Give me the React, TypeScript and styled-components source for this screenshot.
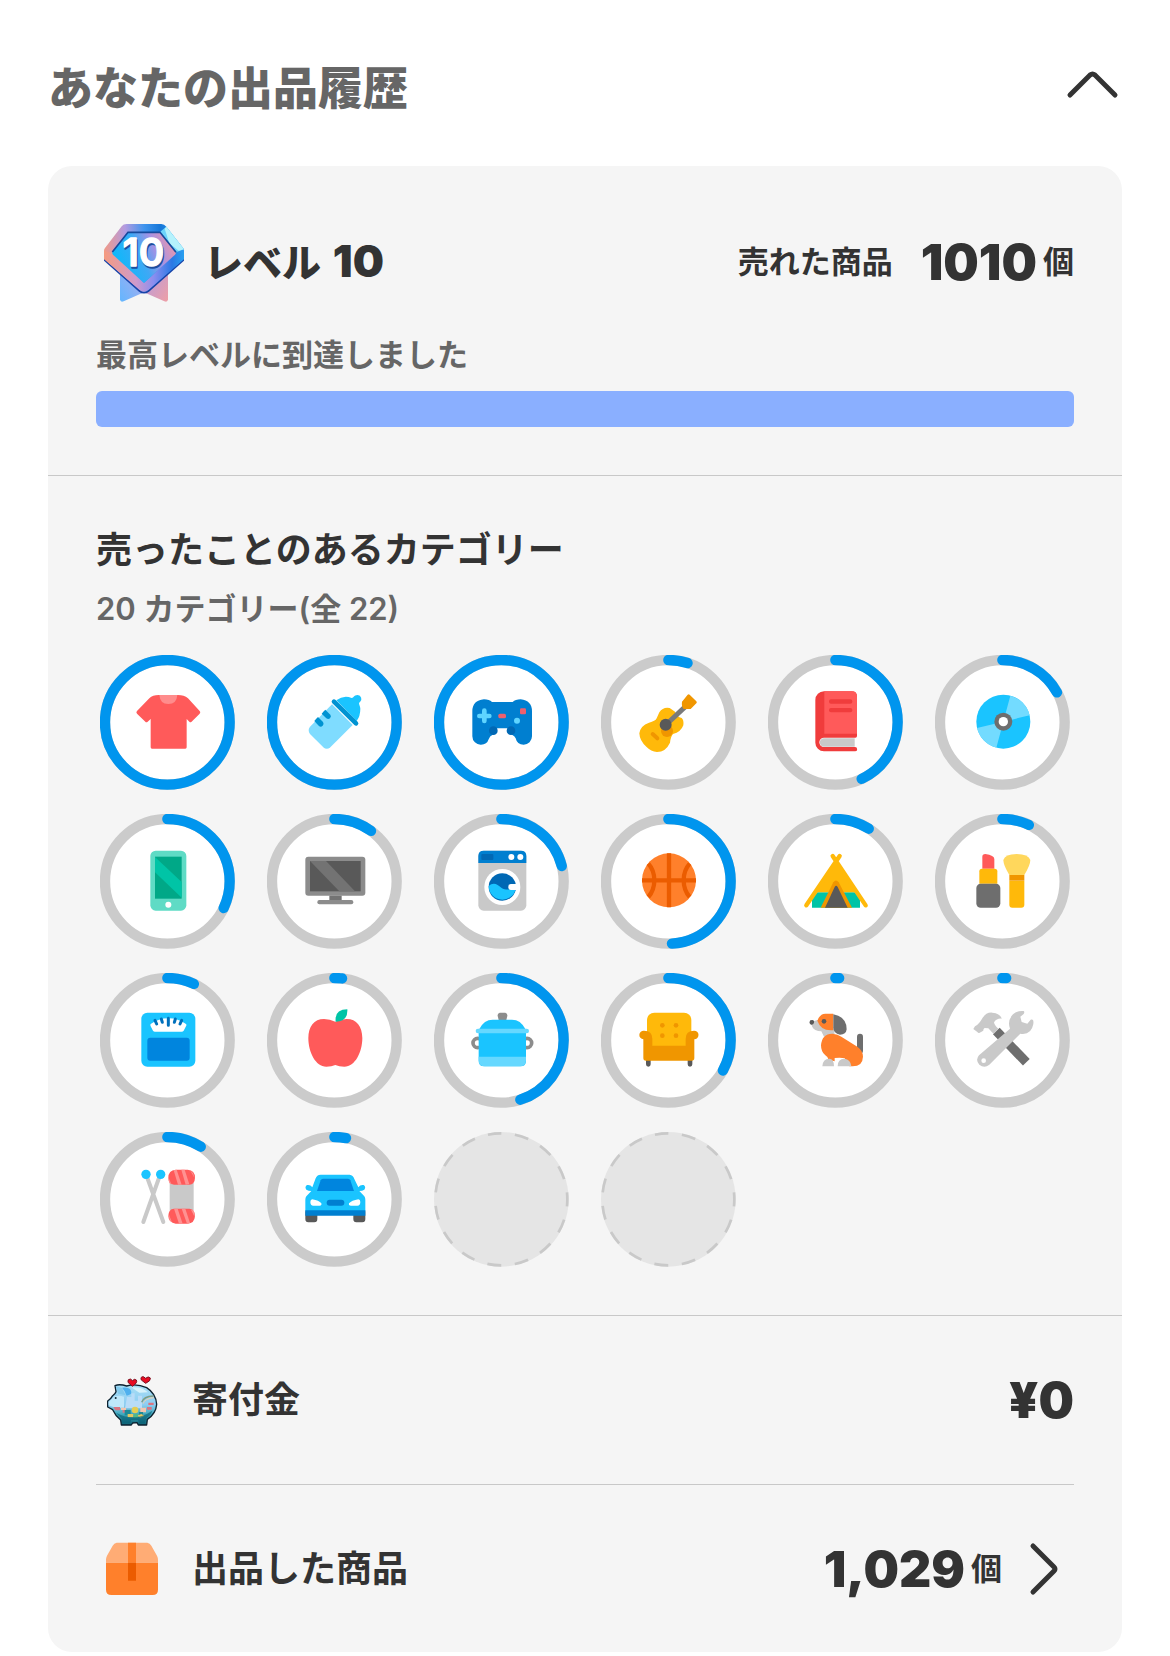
import React, { useState } from "react";
import styled, { createGlobalStyle } from "styled-components";

const GlobalStyle = createGlobalStyle`
  *, *::before, *::after { box-sizing: border-box; }
  body {
    margin: 0;
    background: #fff;
    color: #333;
    font-family: Inter, "Noto Sans CJK JP", sans-serif;
    -webkit-font-smoothing: antialiased;
  }
`;

const Page = styled.main`
  padding: 56px 48px 4px;
`;

const Header = styled.header`
  display: flex;
  align-items: center;
  justify-content: space-between;
  height: 66px;
  margin-bottom: 44px;
`;

const Title = styled.h1`
  margin: 0;
  font-size: 45px;
  line-height: 66px;
  font-weight: 900;
  color: #666;
`;

const ToggleButton = styled.button<{ $open: boolean }>`
  display: flex;
  padding: 0;
  border: 0;
  background: none;
  color: #333;
  cursor: pointer;
  svg { transform: ${(p) => (p.$open ? "none" : "rotate(180deg)")}; }
`;

const Card = styled.div`
  border-radius: 24px;
  background: #f5f5f5;
  overflow: hidden;
`;

const Section = styled.section`
  padding: 48px;
  border-bottom: 1px solid #c8c8c8;
`;

const LevelRow = styled.div`
  display: flex;
  align-items: center;
  justify-content: space-between;
  height: 96px;
`;

const LevelName = styled.div`
  display: flex;
  align-items: center;
  gap: 12px;
`;

const MedalBox = styled.div`
  display: grid;
  place-items: center;
  width: 96px;
  height: 96px;
  padding-top: 2px;
`;

const LevelTitle = styled.h2`
  margin: 0;
  font-size: 39px;
  line-height: 60px;
  font-weight: 900;
`;

const LevelNumber = styled.span`
  margin-left: 4px;
  font-size: 44px;
`;

const Amount = styled.div`
  display: flex;
  align-items: center;
`;

const SoldLabel = styled.span`
  margin-right: 28px;
  font-size: 31px;
  line-height: 46px;
  font-weight: 600;
`;

const Figure = styled.span`
  font-size: 50px;
  line-height: 60px;
  font-weight: 900;
`;

const Unit = styled.span`
  margin-left: 6px;
  font-size: 31px;
  line-height: 46px;
  font-weight: 600;
`;

const Note = styled.p<{ $top: number }>`
  margin: ${(p) => p.$top}px 0 0;
  font-size: 31px;
  line-height: 46px;
  font-weight: 600;
  color: #666;
`;

const LevelBar = styled.div`
  height: 36px;
  margin-top: 13px;
  border-radius: 6px;
  background: #dcdcdc;
  overflow: hidden;
`;

const LevelFill = styled.div`
  height: 100%;
  background: #8aafff;
`;

const SectionTitle = styled.h2`
  margin: 0;
  font-size: 36px;
  line-height: 52px;
  font-weight: 700;
`;

const RingGrid = styled.ul`
  display: grid;
  grid-template-columns: repeat(6, 135px);
  justify-content: space-between;
  row-gap: 24px;
  margin: 23px 0 0;
  padding: 0 4px;
  list-style: none;
`;

const RingCell = styled.li`
  display: grid;
  place-items: center;
  height: 135px;
  > * { grid-area: 1 / 1; }
`;

const SummaryList = styled.div`
  padding: 0 48px;
`;

const SummaryRow = styled.div`
  display: flex;
  align-items: center;
  height: 169px;
  border-bottom: 1px solid #c8c8c8;
`;

const SummaryLink = styled.a`
  display: flex;
  align-items: center;
  height: 167px;
  color: inherit;
  text-decoration: none;
`;

const SummaryLabel = styled.span`
  flex: 1;
  margin-left: 24px;
  font-size: 36px;
  line-height: 52px;
  font-weight: 600;
`;

const ChevronBox = styled.span`
  display: grid;
  place-items: center;
  width: 60px;
  margin-left: 12px;
`;

const Icon = ({ children }: { children: React.ReactNode }) => (
  <svg width="72" height="72" viewBox="0 3 216 216" fill="none" aria-hidden="true">
    {children}
  </svg>
);

const Chevron = ({ side }: { side: "up" | "right" }) =>
  side === "up" ? (
    <svg width="60" height="60" viewBox="0 0 60 60" fill="none" stroke="currentColor" strokeWidth="5" strokeLinecap="round" aria-hidden="true">
      <path d="M8 36 L28 16 Q30.500 14 33 16 L53 36" />
    </svg>
  ) : (
    <svg width="60" height="60" viewBox="0 0 60 60" fill="none" stroke="currentColor" strokeWidth="5" strokeLinecap="round" aria-hidden="true">
      <path d="M19 7 L40 28 Q42 30 40 32 L19 53" />
    </svg>
  );

const Medal = () => (
  <svg width="80" height="78" viewBox="0 0 240 234" role="img" aria-label="レベル10のメダル">
    <defs>
      <linearGradient id="rim" x1="0" y1="0.45" x2="1" y2="0.4">
        <stop offset="0" stopColor="#f29a86" />
        <stop offset="0.28" stopColor="#b39be0" />
        <stop offset="0.52" stopColor="#3f94ee" />
        <stop offset="0.72" stopColor="#1677d8" />
        <stop offset="1" stopColor="#2f9af0" />
      </linearGradient>
      <linearGradient id="rimLow" x1="0" y1="0" x2="1" y2="0">
        <stop offset="0" stopColor="#f59b80" />
        <stop offset="0.4" stopColor="#cf9acb" />
        <stop offset="0.62" stopColor="#8a8ef0" />
        <stop offset="0.85" stopColor="#2a78e4" />
        <stop offset="1" stopColor="#27a0f0" />
      </linearGradient>
      <linearGradient id="gem" x1="0.1" y1="0.6" x2="0.95" y2="0.3">
        <stop offset="0" stopColor="#10b8fa" />
        <stop offset="0.42" stopColor="#3fa8f5" />
        <stop offset="0.7" stopColor="#a592e4" />
        <stop offset="1" stopColor="#e096b4" />
      </linearGradient>
      <linearGradient id="ribbonLeft" x1="0" y1="1" x2="1" y2="0">
        <stop offset="0" stopColor="#62b6ff" />
        <stop offset="0.5" stopColor="#8fb0f4" />
        <stop offset="1" stopColor="#c89ddc" />
      </linearGradient>
      <linearGradient id="ribbonRight" x1="0" y1="0" x2="1" y2="1">
        <stop offset="0" stopColor="#a99bea" />
        <stop offset="1" stopColor="#ef9fa5" />
      </linearGradient>
    </defs>
    <path d="M48 120 V226 Q49 236 59 232 L122 204 V150Z" fill="url(#ribbonLeft)" />
    <path d="M192 120 V226 Q191 236 181 232 L118 204 V150Z" fill="url(#ribbonRight)" />
    <path d="M0 82 V110 L105 203 Q120 214 135 203 L240 110 V82Z" fill="#1743a8" />
    <path d="M68 0 H172 Q181 0 187 8 L238 73 Q240 76 240 80 V105 L134 197 Q120 209 106 197 L0 105 V80 Q0 76 3 72 L53 7 Q58 0 68 0Z" fill="url(#rim)" />
    <path d="M0 80 L24 88 L120 177 L216 88 L240 84 V105 L134 197 Q120 209 106 197 L0 105Z" fill="url(#rimLow)" />
    <path d="M168 24 L187 8 L240 76 L216 85Z" fill="#6cd4fb" />
    <path d="M182 14 L187 8 L240 76 L224 80 L196 58Z" fill="#b5f2fc" />
    <path d="M72 24 H168 L216 84 Q217 88 213 92 L120 177 L27 92 Q23 88 26 83Z" fill="url(#gem)" />
    <path d="M25 84 L72 25 H168 L216 85" fill="none" stroke="#174a9c" strokeWidth="5" />
    <text x="121" y="131" textAnchor="middle" fontFamily="Inter, sans-serif" fontSize="116" fontWeight="600" fill="#1d4e9e" stroke="#1d4e9e" strokeWidth="4" strokeLinejoin="round">10</text>
    <text x="118" y="126" textAnchor="middle" fontFamily="Inter, sans-serif" fontSize="116" fontWeight="600" fill="#fff" stroke="#fff" strokeWidth="4" strokeLinejoin="round">10</text>
  </svg>
);

const Tshirt = () => (
  <Icon>
    <path d="M80 27 H138 Q156 27 168 37 L203 75 Q207 79 203 83 L178 108 Q175 110 172 107 L164 99 V184 Q164 188 160 188 H60 Q56 188 56 184 V99 L47 107 Q43 110 40 107 L15 83 Q11 79 15 75 L52 37 Q62 27 80 27Z" fill="#ff5a5a" />
    <path d="M82 27 H136 Q134 54 109 54 Q84 54 82 27Z" fill="#ff8c8c" />
  </Icon>
);

const Bottle = () => (
  <Icon>
    <path d="M99 55 L161 117 L94 184 Q83 193 73 184 L33 144 Q25 132 33 122Z" fill="#7fdcff" />
    <path d="M112 43 Q134 26 158 36 C165 36 163 27 176 27 A12 12 0 0 1 183 48 C176 52 184 58 184 68 Q184 90 173 105Z" fill="#1ac4ff" />
    <path d="M105 47 L171 112" stroke="#0093d2" strokeWidth="14" strokeLinecap="round" />
    <path d="M51 99 L57 93 L72 108 Q76 114 71 119 Q65 125 59 119 L46 105Z" fill="#0093d2" />
    <path d="M73 77 L79 71 L94 86 Q98 91 93 97 Q88 101 82 97 L68 83Z" fill="#0093d2" />
  </Icon>
);

const Gamepad = () => (
  <Icon>
    <path d="M54 40 Q70 40 78 48 H140 Q148 40 164 40 Q198 44 198 76 V151 A25 25 0 0 1 173 176 Q153 176 149 157 Q146 149 138 146 L124 127 H94 L80 146 Q71 149 68 160 Q63 176 45 176 A25 25 0 0 1 19 151 V76 Q19 43 54 40Z" fill="#007fd0" />
    <circle cx="82" cy="134" r="13" fill="#0068b4" />
    <circle cx="135" cy="134" r="13" fill="#0068b4" />
    <path d="M55 74 V105 M40 90 H70" stroke="#5ed4ff" strokeWidth="14" strokeLinecap="round" />
    <rect x="97" y="83" width="23" height="14" rx="5" fill="#f0606e" />
    <rect x="162" y="67" width="18" height="18" rx="4" fill="#f0606e" />
    <circle cx="153" cy="104" r="9" fill="#5ed4ff" />
  </Icon>
);

const Guitar = () => (
  <Icon>
    <path d="M79 79 Q90 62 110 66 L126 77 Q132 93 146 96 Q153 102 151 118 Q144 138 120 144 Q113 152 111 170 Q98 198 72 198 Q54 196 40 182 Q20 165 19 142 Q22 119 48 110 Q67 106 71 97Z" fill="#ffb90a" />
    <circle cx="102" cy="135" r="18" fill="#f09600" />
    <path d="M59 144 L73 157" stroke="#f09600" strokeWidth="12" strokeLinecap="round" />
    <path d="M98 117 L157 62" stroke="#7a7a7a" strokeWidth="15" />
    <circle cx="98" cy="116" r="18" fill="#595959" />
    <path d="M147 47 L164 26 Q167 23 170 26 L190 46 Q193 49 190 52 L173 69 H152 Q145 61 147 47Z" fill="#f09600" />
  </Icon>
);

const Book = () => (
  <Icon>
    <path d="M72 16 H155 Q171 16 171 32 V150 Q171 155 166 155 H72 A14 14 0 0 0 72 183 H165 A6 6 0 0 1 165 196 H72 A26 26 0 0 1 46 170 V42 A26 26 0 0 1 72 16Z" fill="#f03c3c" />
    <path d="M72 157 H164 V182 H72 A12 12 0 0 1 72 157Z" fill="#c9c9c9" />
    <path d="M73 16 H155 Q171 16 171 32 V143 H73Z" fill="#ff5a5a" />
    <rect x="87" y="40" width="70" height="13" rx="6" fill="#f03c3c" />
    <rect x="87" y="66" width="70" height="13" rx="6" fill="#f03c3c" />
  </Icon>
);

const Disc = () => (
  <Icon>
    <circle cx="109" cy="107" r="81" fill="#1ac4ff" />
    <path d="M109 107 L130 29 A81 81 0 0 1 188 88Z M109 107 L88 185 A81 81 0 0 1 30 126Z" fill="#73dbff" />
    <circle cx="109" cy="107" r="27" fill="#6e6e6e" />
    <circle cx="109" cy="107" r="14" fill="#fff" />
  </Icon>
);

const Phone = () => (
  <Icon>
    <rect x="55" y="17" width="108" height="180" rx="16" fill="#5fdbc5" />
    <rect x="69" y="35" width="80" height="126" fill="#00a887" />
    <path d="M69 36 L149 111 V158 L69 82Z" fill="#00c4a6" />
    <circle cx="109" cy="179" r="9" fill="#fff" />
  </Icon>
);

const Monitor = () => (
  <Icon>
    <rect x="19" y="35" width="180" height="117" rx="9" fill="#8c8c8c" />
    <rect x="33" y="48" width="152" height="91" fill="#595959" />
    <path d="M33 48 H81 L168 139 H121Z" fill="#737373" />
    <path d="M91 152 H128 V166 H91Z" fill="#737373" />
    <rect x="55" y="165" width="108" height="13" rx="6" fill="#8c8c8c" />
  </Icon>
);

const Washer = () => (
  <Icon>
    <rect x="37" y="17" width="144" height="180" rx="16" fill="#c9c9c9" />
    <path d="M37 54 V33 Q37 17 53 17 H165 Q181 17 181 33 V54Z" fill="#007fd0" />
    <rect x="46" y="27" width="36" height="18" rx="3" fill="#0068b4" />
    <circle cx="136" cy="36" r="9" fill="#fff" />
    <circle cx="163" cy="36" r="9" fill="#fff" />
    <circle cx="109" cy="126" r="54" fill="#fff" />
    <circle cx="109" cy="126" r="41" fill="#0068b4" />
    <path d="M68 124 C82 110 94 118 106 128 C120 138 134 132 149 132 A41 41 0 0 1 68 124Z" fill="#1ac4ff" />
    <rect x="127" y="117" width="30" height="18" rx="8" fill="#fff" />
  </Icon>
);

const Basketball = () => (
  <Icon>
    <circle cx="108" cy="106" r="81" fill="#ff802b" />
    <path d="M108 25 V187 M27 106 H189 M46 56 Q64 76 64 106 Q64 136 46 156 M170 56 Q152 76 152 106 Q152 136 170 156" stroke="#eb5c00" strokeWidth="13" />
  </Icon>
);

const Tent = () => (
  <Icon>
    <path d="M52 142 H164 L180 155 V188 H36 V155Z" fill="#00c4a6" />
    <path d="M108 46 L172 142 H44Z" fill="#ffb90a" />
    <path d="M98 33 L197 181 M119 33 L19 181" stroke="#ffb90a" strokeWidth="13" strokeLinecap="round" />
    <path d="M62 188 L100 112 Q108 101 116 112 L156 188Z" fill="#f09600" />
    <path d="M75 188 L104 126 Q108 118 113 126 L143 188Z" fill="#595959" />
  </Icon>
);

const Makeup = () => (
  <Icon>
    <path d="M46 71 V35 Q46 27 55 27 Q82 31 82 42 V71Z" fill="#ff5a5a" />
    <path d="M37 116 V79 Q37 71 45 71 H83 Q91 71 91 79 V116Z" fill="#ffb90a" />
    <rect x="28" y="116" width="72" height="72" rx="13" fill="#6e6e6e" />
    <path d="M109 45 Q114 27 149 27 Q184 27 190 45 Q190 60 172 90 H127 Q109 60 109 45Z" fill="#ffd75c" />
    <path d="M127 107 H172 V179 Q172 188 163 188 H136 Q127 188 127 179Z" fill="#ffb90a" />
    <path d="M127 90 H172 V107 H127Z" fill="#f09600" />
  </Icon>
);

const Scale = () => (
  <Icon>
    <rect x="28" y="26" width="162" height="162" rx="18" fill="#1ac4ff" />
    <rect x="46" y="101" width="127" height="69" rx="9" fill="#0085de" />
    <path d="M56 60 Q80 43 109 43 Q138 43 162 60 Q165 63 162 67 L155 80 Q153 83 149 83 H69 Q65 83 63 80 L56 67 Q54 63 56 60Z" fill="#fff" />
    <path d="M109 43 V64 M88 45 L91 55 M130 45 L127 55 M69 49 L74 60 M149 49 L144 60" stroke="#0070bc" strokeWidth="9" strokeLinecap="round" />
  </Icon>
);

const Apple = () => (
  <Icon>
    <path d="M109 53 Q93 45 75 45 C45 45 28 68 28 102 C28 145 50 188 82 188 Q98 188 109 183 Q120 188 136 188 C168 188 190 145 190 102 C190 68 173 45 143 45 Q125 45 109 53Z" fill="#ff5a5a" />
    <path d="M110 53 Q106 16 145 16 Q147 53 110 53Z" fill="#00c4a6" />
  </Icon>
);

const Pot = () => (
  <Icon>
    <circle cx="35" cy="117" r="14" stroke="#8c8c8c" strokeWidth="11" />
    <circle cx="183" cy="117" r="14" stroke="#8c8c8c" strokeWidth="11" />
    <path d="M101 26 H118 Q125 28 124 36 L121 48 H98 L95 36 Q94 28 101 26Z" fill="#8c8c8c" />
    <path d="M40 75 Q54 47 80 47 H138 Q164 47 178 75Z" fill="#1ac4ff" />
    <path d="M38 86 H180 V171 Q180 187 164 187 H54 Q38 187 38 171Z" fill="#1ac4ff" />
    <path d="M38 158 H180 V168 Q180 187 161 187 H57 Q38 187 38 168Z" fill="#66d8ff" />
    <rect x="29" y="74" width="160" height="14" rx="7" fill="#66d8ff" />
  </Icon>
);

const Sofa = () => (
  <Icon>
    <path d="M39 165 H53 V181 Q53 188 46 188 Q39 188 39 181Z M164 165 H178 V181 Q178 188 171 188 Q164 188 164 181Z" fill="#595959" />
    <rect x="42" y="26" width="133" height="110" rx="22" fill="#ffb90a" />
    <path d="M33 80 Q58 80 58 104 V125 H158 V104 Q158 80 183 80 A13 13 0 0 1 184 106 V162 Q184 170 176 170 H39 Q31 170 31 162 V106 A13 13 0 0 1 33 80Z" fill="#f09600" />
    <circle cx="88" cy="64" r="7" fill="#f09600" />
    <circle cx="129" cy="64" r="7" fill="#f09600" />
    <circle cx="88" cy="95" r="7" fill="#f09600" />
    <circle cx="129" cy="95" r="7" fill="#f09600" />
  </Icon>
);

const Dog = () => (
  <Icon>
    <path d="M180 98 V140" stroke="#6e6e6e" strokeWidth="18" strokeLinecap="round" />
    <path d="M52 48 L34 54 Q34 72 46 78 Q54 82 64 82 L72 98 L104 90 L100 70Z" fill="#c9c9c9" />
    <path d="M100 29 H76 Q60 29 52 50 Q62 79 92 79 H100Z" fill="#ff802b" />
    <path d="M100 31 Q140 38 140 76 Q138 92 120 92 Q100 90 100 70Z" fill="#6e6e6e" />
    <circle cx="72" cy="52" r="7" fill="#595959" />
    <path d="M31 49 Q44 45 42 56 Q40 63 33 62 Q25 58 31 49Z" fill="#595959" />
    <path d="M63 124 Q66 88 98 89 Q114 90 124 98 L172 128 Q189 140 189 158 Q188 187 158 187 H148 L134 163 Q124 160 104 162 V172 L86 168 Q86 160 76 154 Q63 144 63 124Z" fill="#ff802b" />
    <path d="M67 187 Q68 164 88 164 Q102 164 102 187Z M113 187 Q113 164 133 164 Q152 166 154 187Z" fill="#c9c9c9" />
  </Icon>
);

const Tools = () => (
  <Icon>
    <path d="M88 81 L178 175" stroke="#6e6e6e" strokeWidth="28" />
    <path d="M19 75 L24 67 Q37 60 46 43 Q58 24 76 26 Q100 28 104 44 Q90 42 81 55 Q82 64 94 74 L80 90 L64 73 L53 72 Q48 76 49 80 L38 86 Q34 88 31 84Z" fill="#c9c9c9" />
    <path d="M170 21 C172 22 173 25 170 30 L160 38 L164 54 L181 59 L191 47 C199 44 200 50 199 60 Q193 94 160 89 L67 182 Q52 194 37 182 Q24 168 36 154 L129 74 Q120 50 138 31 Q152 19 170 21Z" fill="#c9c9c9" />
    <circle cx="50" cy="170" r="7" fill="#fff" />
  </Icon>
);

const Yarn = () => (
  <Icon>
    <path d="M45 42 L94 177 M82 42 L34 177" stroke="#c9c9c9" strokeWidth="12" strokeLinecap="round" />
    <circle cx="42" cy="34" r="14" fill="#1ac4ff" />
    <circle cx="86" cy="34" r="14" fill="#1ac4ff" />
    <rect x="113" y="60" width="72" height="82" fill="#c9c9c9" />
    <path d="M131 20 H167 Q189 22 189 44 Q188 65 172 65 H126 Q109 63 109 44 Q109 22 131 20Z M126 137 H172 Q189 138 189 160 Q187 182 167 182 H131 Q110 180 109 160 Q109 138 126 137Z" fill="#ff5a5a" />
    <path d="M125 22 L134 20 L149 65 H138Z M148 20 H158 L172 64 L161 65Z M174 22 L183 30 L188 46Z M109 43 L119 65 L112 60Z M126 137 H137 L152 182 H141Z M149 137 H160 L174 180 L165 182Z M110 153 L120 178 L113 172Z M176 138 L186 145 L188 163Z" fill="#ff9191" />
  </Icon>
);

const Car = () => (
  <Icon>
    <path d="M19 145 H55 V168 Q55 178 46 178 H28 Q19 178 19 168Z M163 145 H199 V168 Q199 178 190 178 H172 Q163 178 163 168Z" fill="#595959" />
    <path d="M65 35 H152 Q162 36 166 48 L178 73 Q184 64 194 66 Q202 72 196 80 Q190 84 181 84 L196 100 Q199 104 199 110 V145 H19 V110 Q19 104 22 100 L37 84 Q28 84 22 80 Q16 72 24 66 Q34 64 40 73 L50 46 Q53 36 65 35Z" fill="#1ac4ff" />
    <path d="M72 47 H147 Q152 47 154 52 L165 84 H54 L65 52 Q67 47 72 47Z" fill="#0085de" />
    <path d="M19 142 H199 V158 H19Z" fill="#007fd0" />
    <rect x="83" y="110" width="53" height="18" rx="9" fill="#007fd0" />
    <path d="M40 109 Q60 112 67 121 Q69 128 62 128 H43 Q34 128 34 117 Q34 109 40 109Z M178 109 Q158 112 150 121 Q148 128 156 128 H175 Q184 128 184 117 Q184 109 178 109Z" fill="#fff" />
  </Icon>
);

const PiggyBank = () => (
  <Icon>
    <defs>
      <linearGradient id="pig" x1="0" y1="0" x2="0" y2="1">
        <stop offset="0" stopColor="#a8def5" />
        <stop offset="0.5" stopColor="#8dcdf2" />
        <stop offset="0.75" stopColor="#3aa5b8" />
        <stop offset="1" stopColor="#0c5f72" />
      </linearGradient>
    </defs>
    <path d="M57 68 Q70 62 92 69 Q120 60 152 74 Q180 92 182 124 Q180 152 154 169 L152 186 H127 L123 179 L110 180 L106 186 H76 L74 171 Q58 158 50 140 L35 132 V114 Q44 109 50 98 Q58 92 60 86Z" fill="url(#pig)" stroke="#0d2230" strokeWidth="4" strokeLinejoin="round" />
    <path d="M78 74 Q108 70 106 92 Q98 96 92 98 Q88 84 78 74Z" fill="#4fb0ee" />
    <path d="M59 70 L78 75 L89 97 L67 92Z" fill="#82caee" />
    <path d="M106 73 Q138 70 156 88 L130 89Z" fill="#d7f2fb" />
    <path d="M56 100 Q70 96 84 101 V134 H58 L38 127 V117Z" fill="#bfe7fa" />
    <path d="M93 102 H106 V91 H116 V113 H126 V98 H138 V136 H87Z" fill="#b8dcf8" />
    <path d="M137 118 Q143 100 172 99" stroke="#7f9c82" strokeWidth="4" />
    <path d="M141 122 Q147 106 174 104" stroke="#f0cfae" strokeWidth="3" />
    <path d="M52 132 H72 V142 H58Z M80 141 H92 V149 H80Z M157 119 H173 V126 H157Z M153 132 H167 V140 H153Z" fill="#d97482" />
    <path d="M75 134 H90 V141 H75Z M133 134 H150 V148 H133Z" fill="#f2c5b0" />
    <path d="M86 141 H104 V157 H86Z M129 147 H141 V160 H129Z" fill="#1d8b97" />
    <circle cx="117" cy="141" r="10" fill="#e4cd53" />
    <path d="M95 153 H112 V163 H95Z M122 158 L136 153 L146 158 L134 164Z" fill="#e3c763" />
    <path d="M113 153 H126 V165 H113Z" fill="#50b889" />
    <path d="M60 149 Q116 179 169 143 Q164 158 152 164 L146 181 H130 L126 171 H106 L102 181 H79 L77 167Z" fill="#075e73" opacity="0.6" />
    <circle cx="59" cy="105" r="3" fill="#122d3c" />
    <path d="M109 70 L96 58 Q94 48 103 48 L110 53 Q115 46 121 51 Q126 59 109 70Z M149 61 L136 51 Q132 41 142 41 L149 46 Q157 38 163 45 Q165 54 149 61Z" fill="#e80b21" stroke="#7b1121" strokeWidth="3" />
  </Icon>
);

const Parcel = () => (
  <Icon>
    <path d="M62 32 H154 Q162 33 166 41 L183 71 Q186 77 186 84 V92 H30 V84 Q30 77 33 71 L50 41 Q54 33 62 32Z" fill="#ffac75" />
    <path d="M30 92 H186 V173 Q186 189 170 189 H46 Q30 189 30 173Z" fill="#ff802b" />
    <path d="M96 32 H120 V92 H96Z" fill="#ff802b" />
    <path d="M96 92 H120 V146 H96Z" fill="#eb5c00" />
  </Icon>
);

const categories: { name: string; percent: number; Art: () => React.ReactElement }[] = [
  { name: "ファッション", percent: 100, Art: Tshirt },
  { name: "ベビー・キッズ", percent: 100, Art: Bottle },
  { name: "ゲーム", percent: 100, Art: Gamepad },
  { name: "楽器", percent: 5, Art: Guitar },
  { name: "本", percent: 43, Art: Book },
  { name: "CD・DVD", percent: 17, Art: Disc },
  { name: "スマホ", percent: 32, Art: Phone },
  { name: "テレビ", percent: 10, Art: Monitor },
  { name: "家電", percent: 21, Art: Washer },
  { name: "スポーツ", percent: 49, Art: Basketball },
  { name: "アウトドア", percent: 9, Art: Tent },
  { name: "コスメ", percent: 7, Art: Makeup },
  { name: "ダイエット", percent: 7, Art: Scale },
  { name: "食品", percent: 2, Art: Apple },
  { name: "キッチン", percent: 45, Art: Pot },
  { name: "家具", percent: 33, Art: Sofa },
  { name: "ペット", percent: 1, Art: Dog },
  { name: "DIY", percent: 1, Art: Tools },
  { name: "ハンドメイド", percent: 9, Art: Yarn },
  { name: "車", percent: 3, Art: Car },
];
const totalCategories = 22;

const Ring = ({ percent }: { percent: number }) => (
  <svg width="135" height="135" viewBox="0 0 405 405" aria-hidden="true">
    <circle cx="202" cy="202" r="187" fill="#fff" stroke="#cbcbcb" strokeWidth="31" />
    <circle
      cx="202"
      cy="202"
      r="187"
      fill="none"
      stroke="#0095ee"
      strokeWidth="31"
      strokeLinecap="round"
      pathLength={100}
      strokeDasharray={`${percent} 100`}
      transform="rotate(-90 202 202)"
    />
  </svg>
);

const EmptyRing = () => (
  <svg width="135" height="135" viewBox="0 0 405 405" aria-hidden="true">
    <circle cx="202" cy="202" r="202" fill="#e5e5e5" />
    <circle cx="202" cy="202" r="198" fill="none" stroke="#c9c9c9" strokeWidth="8" pathLength={1245} strokeDasharray="42 41" strokeDashoffset="42" transform="rotate(-90 202 202)" />
  </svg>
);

export default function App() {
  const [open, setOpen] = useState(true);
  const levelProgress = 100;

  return (
    <>
      <GlobalStyle />
      <Page>
        <Header>
          <Title>あなたの出品履歴</Title>
          <ToggleButton type="button" $open={open} aria-expanded={open} aria-label="開閉" onClick={() => setOpen(!open)}>
            <Chevron side="up" />
          </ToggleButton>
        </Header>
        {open && (
          <Card>
            <Section>
              <LevelRow>
                <LevelName>
                  <MedalBox>
                    <Medal />
                  </MedalBox>
                  <LevelTitle>
                    レベル <LevelNumber>10</LevelNumber>
                  </LevelTitle>
                </LevelName>
                <Amount>
                  <SoldLabel>売れた商品</SoldLabel>
                  <Figure>1010</Figure>
                  <Unit>個</Unit>
                </Amount>
              </LevelRow>
              <Note $top={22}>最高レベルに到達しました</Note>
              <LevelBar role="progressbar" aria-label="レベル" aria-valuenow={levelProgress}>
                <LevelFill style={{ width: `${levelProgress}%` }} />
              </LevelBar>
            </Section>
            <Section>
              <SectionTitle>売ったことのあるカテゴリー</SectionTitle>
              <Note $top={10}>20 カテゴリー(全 22)</Note>
              <RingGrid>
                {categories.map(({ name, percent, Art }) => (
                  <RingCell key={name} aria-label={name}>
                    <Ring percent={percent} />
                    <Art />
                  </RingCell>
                ))}
                {Array.from({ length: totalCategories - categories.length }, (_, i) => (
                  <RingCell key={i}>
                    <EmptyRing />
                  </RingCell>
                ))}
              </RingGrid>
            </Section>
            <SummaryList>
              <SummaryRow>
                <PiggyBank />
                <SummaryLabel>寄付金</SummaryLabel>
                <Figure>¥0</Figure>
              </SummaryRow>
              <SummaryLink href="#listings">
                <Parcel />
                <SummaryLabel>出品した商品</SummaryLabel>
                <Figure>1,029</Figure>
                <Unit>個</Unit>
                <ChevronBox>
                  <Chevron side="right" />
                </ChevronBox>
              </SummaryLink>
            </SummaryList>
          </Card>
        )}
      </Page>
    </>
  );
}
